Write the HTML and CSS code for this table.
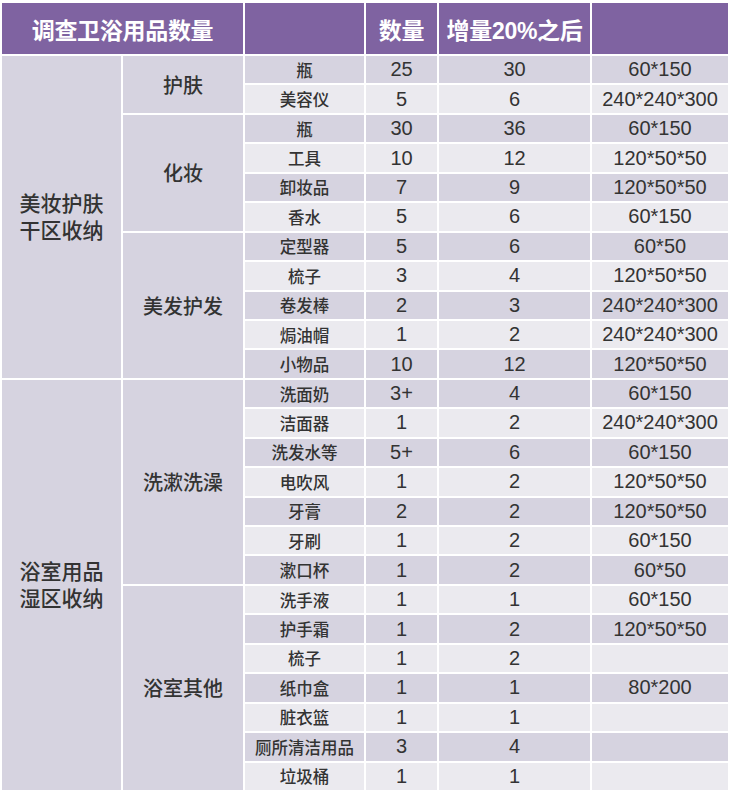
FILE: index.html
```html
<!DOCTYPE html>
<html lang="zh-CN">
<head>
<meta charset="utf-8">
<title>调查卫浴用品数量</title>
<link rel="stylesheet" href="styles.css">
</head>
<body>
<div class="table">
  <div class="cell head span-c2">调查卫浴用品数量</div>
  <div class="cell head"></div>
  <div class="cell head">数量</div>
  <div class="cell head">增量20%之后</div>
  <div class="cell head"></div>

  <div class="cell group dark span-r11"><span>美妆护肤<br>干区收纳</span></div>
  <div class="cell sub dark span-r2">护肤</div>
  <div class="cell item dark">瓶</div><div class="cell num dark">25</div><div class="cell num dark">30</div><div class="cell num dark">60*150</div>
  <div class="cell item light">美容仪</div><div class="cell num light">5</div><div class="cell num light">6</div><div class="cell num light">240*240*300</div>

  <div class="cell sub dark span-r4">化妆</div>
  <div class="cell item dark">瓶</div><div class="cell num dark">30</div><div class="cell num dark">36</div><div class="cell num dark">60*150</div>
  <div class="cell item light">工具</div><div class="cell num light">10</div><div class="cell num light">12</div><div class="cell num light">120*50*50</div>
  <div class="cell item dark">卸妆品</div><div class="cell num dark">7</div><div class="cell num dark">9</div><div class="cell num dark">120*50*50</div>
  <div class="cell item light">香水</div><div class="cell num light">5</div><div class="cell num light">6</div><div class="cell num light">60*150</div>

  <div class="cell sub dark span-r5">美发护发</div>
  <div class="cell item dark">定型器</div><div class="cell num dark">5</div><div class="cell num dark">6</div><div class="cell num dark">60*50</div>
  <div class="cell item light">梳子</div><div class="cell num light">3</div><div class="cell num light">4</div><div class="cell num light">120*50*50</div>
  <div class="cell item dark">卷发棒</div><div class="cell num dark">2</div><div class="cell num dark">3</div><div class="cell num dark">240*240*300</div>
  <div class="cell item light">焗油帽</div><div class="cell num light">1</div><div class="cell num light">2</div><div class="cell num light">240*240*300</div>
  <div class="cell item dark">小物品</div><div class="cell num dark">10</div><div class="cell num dark">12</div><div class="cell num dark">120*50*50</div>

  <div class="cell group dark span-r14"><span>浴室用品<br>湿区收纳</span></div>
  <div class="cell sub dark span-r7">洗漱洗澡</div>
  <div class="cell item dark">洗面奶</div><div class="cell num dark">3+</div><div class="cell num dark">4</div><div class="cell num dark">60*150</div>
  <div class="cell item light">洁面器</div><div class="cell num light">1</div><div class="cell num light">2</div><div class="cell num light">240*240*300</div>
  <div class="cell item dark">洗发水等</div><div class="cell num dark">5+</div><div class="cell num dark">6</div><div class="cell num dark">60*150</div>
  <div class="cell item light">电吹风</div><div class="cell num light">1</div><div class="cell num light">2</div><div class="cell num light">120*50*50</div>
  <div class="cell item dark">牙膏</div><div class="cell num dark">2</div><div class="cell num dark">2</div><div class="cell num dark">120*50*50</div>
  <div class="cell item light">牙刷</div><div class="cell num light">1</div><div class="cell num light">2</div><div class="cell num light">60*150</div>
  <div class="cell item dark">漱口杯</div><div class="cell num dark">1</div><div class="cell num dark">2</div><div class="cell num dark">60*50</div>

  <div class="cell sub dark span-r7">浴室其他</div>
  <div class="cell item light">洗手液</div><div class="cell num light">1</div><div class="cell num light">1</div><div class="cell num light">60*150</div>
  <div class="cell item dark">护手霜</div><div class="cell num dark">1</div><div class="cell num dark">2</div><div class="cell num dark">120*50*50</div>
  <div class="cell item light">梳子</div><div class="cell num light">1</div><div class="cell num light">2</div><div class="cell num light"></div>
  <div class="cell item dark">纸巾盒</div><div class="cell num dark">1</div><div class="cell num dark">1</div><div class="cell num dark">80*200</div>
  <div class="cell item light">脏衣篮</div><div class="cell num light">1</div><div class="cell num light">1</div><div class="cell num light"></div>
  <div class="cell item dark">厕所清洁用品</div><div class="cell num dark">3</div><div class="cell num dark">4</div><div class="cell num dark"></div>
  <div class="cell item light">垃圾桶</div><div class="cell num light">1</div><div class="cell num light">1</div><div class="cell num light"></div>
</div>
</body>
</html>
```

FILE: styles.css
```css
html, body {
  margin: 0;
  padding: 0;
  background: #ffffff;
}

body {
  font-family: "Liberation Sans", "Noto Sans CJK SC", sans-serif;
  color: #333333;
}

.table {
  display: grid;
  grid-template-columns: 119px 120px 119px 71px 151px 136px;
  grid-template-rows: 51px repeat(25, 27.44px);
  gap: 2px;
  padding: 3px 0 0 2px;
  width: max-content;
}

.cell {
  display: flex;
  align-items: center;
  justify-content: center;
  text-align: center;
  white-space: nowrap;
  overflow: hidden;
}

.head {
  background: #7f63a1;
  color: #ffffff;
  font-weight: bold;
  font-size: 23px;
  letter-spacing: -0.3px;
}

.span-c2 { grid-column: span 2; }
.span-r2 { grid-row: span 2; }
.span-r4 { grid-row: span 4; }
.span-r5 { grid-row: span 5; }
.span-r7 { grid-row: span 7; }
.span-r11 { grid-row: span 11; }
.span-r14 { grid-row: span 14; }

.dark { background: #d6d3e0; }
.light { background: #ebeaef; }

.group {
  font-size: 21px;
  line-height: 27px;
  font-weight: 500;
}

.sub {
  font-size: 20px;
  font-weight: 500;
}

.item {
  font-size: 16.5px;
  font-weight: 500;
}

.num {
  font-size: 20px;
}
```
